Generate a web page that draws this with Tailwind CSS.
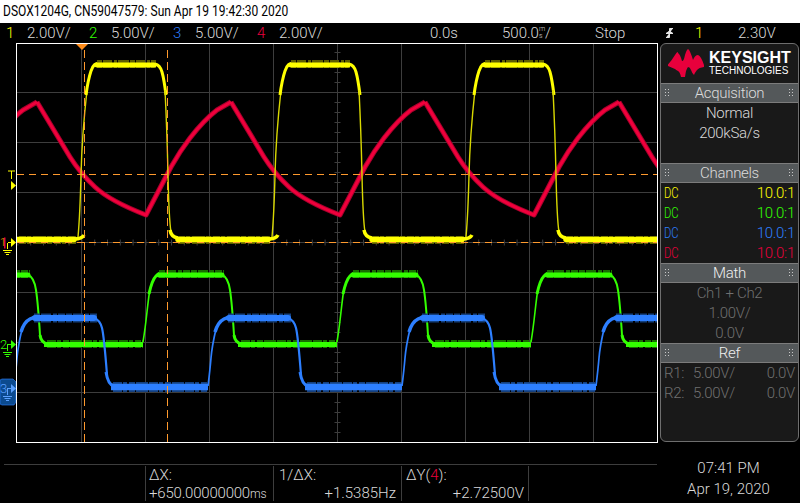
<!doctype html>
<html>
<head>
<meta charset="utf-8">
<script src="https://cdn.jsdelivr.net/npm/@tailwindcss/browser@4"></script>
</head>
<body class="bg-black">
<div class="w-[800px] h-[503px] overflow-hidden bg-black text-[#d9d9d9] font-['Roboto','Liberation_Sans',sans-serif] font-light text-[15px] leading-5">

  <!-- title -->
  <div class="h-[23px] bg-white text-black pl-[3px] pt-[1px] whitespace-nowrap">
    <div class="origin-left scale-x-[.775] text-[15.5px] font-normal">DSOX1204G, CN59047579: Sun Apr 19 19:42:30 2020</div>
  </div>

  <!-- channel / timebase status -->
  <div class="h-5 flex items-center pl-[6px] whitespace-nowrap">
    <span class="w-[21px] text-[#ffff00]">1</span><span class="w-[62px]">2.00V/</span>
    <span class="w-[22px] text-[#33ff00]">2</span><span class="w-[62px]">5.00V/</span>
    <span class="w-[22px] text-[#2d7fff]">3</span><span class="w-[62px]">5.00V/</span>
    <span class="w-[22px] text-[#e8003c]">4</span><span class="w-[151px]">2.00V/</span>
    <span class="w-[72px]">0.0s</span>
    <span class="w-[93px] flex items-center">500.0<span class="flex flex-col text-[7px] leading-[7px]"><span>m</span><span>s</span></span>/</span>
    <span class="w-[70px]">Stop</span>
    <span class="w-[30px]">
      <svg width="9" height="12" viewBox="0 0 9 12" fill="none" stroke="#e6e6e6"><path d="M1 10.5h3.5V1.500H8M1 6.500l3.500-2.500 3.500 2.500z" fill="#e6e6e6"/></svg>
    </span>
    <span class="w-[43px] text-[#ffff00]">1</span><span>2.30V</span>
  </div>

  <div class="flex h-[400px]">
    <!-- reference markers left of the graticule -->
    <svg class="w-4 h-[400px] shrink-0" viewBox="0 43 16 400">
      <g fill="#ffff00" stroke="none">
        <path d="M8 170.500h7v1h-3v7.500h-1v-7.500h-3z"/>
        <path d="M11 181l5 4.500-5 4.500z"/>
        <path d="M11 238l5 4.500-5 4.500z"/>
        <path d="M7 243h1v6h-1zM3 250h9v1h-9zM4.500 252h6v1h-6zM6 254h3v1h-3z"/>
        <path d="M8 242h3v1h-3z"/>
      </g>
      <path d="M4 237.500h1.500v11h-1.500z" fill="#e8003c"/>
      <text x="0" y="246" font-size="11" fill="#e8a000" font-family="Roboto, sans-serif">1</text>
      <g fill="#33ff00">
        <path d="M11 340l5 4.500-5 4.500z"/>
        <path d="M7 344h4v1h-3v6h-1zM3 352h9v1h-9zM4.500 354h6v1h-6zM6 356h3v1h-3z"/>
        <text x="0" y="349" font-size="13" font-family="Roboto, sans-serif">2</text>
      </g>
      <path d="M2 379h11l3 3v20l-2 3h-12l-2-1v-24z" fill="#0b4a8f" stroke="#2d7fff" stroke-width="0.6"/>
      <g fill="#5aa0ff">
        <path d="M11 384l5 4.500-5 4.500z"/>
        <path d="M7 388h4v1h-3v6h-1zM3 396h9v1h-9zM4.500 398h6v1h-6zM6 400h3v1h-3z"/>
        <text x="0" y="393" font-size="13" font-family="Roboto, sans-serif">3</text>
      </g>
    </svg>

    <!-- graticule and traces, drawn in page coordinates -->
    <svg class="w-[642px] h-[400px] shrink-0" viewBox="16 43 642 400" fill="none">
      <defs>
        <clipPath id="plot"><rect x="17" y="44" width="640" height="398"/></clipPath>
        <g id="red">
          <path stroke-linejoin="round" d="M37 102L70 157Q80 173 95 187T146 215L171 167Q180 151 190 138Q204 120 217 110L231 102"/>
        </g>
        <g id="yellow">
          <path stroke="#d8d800" stroke-width="1.400" d="M78 237Q80 215 81 175T87 90"/>
          <path stroke="#ffff00" stroke-width="3" d="M86 95Q88 80 91 71T99 64"/>
          <path stroke="#5f5f00" stroke-width="8" stroke-dasharray="5 1 9 2 3 1 11 1" d="M97 64H156"/>
          <path stroke="#ffff00" stroke-width="5" stroke-linecap="round" d="M97 65H154"/>
          <path stroke="#ffff00" stroke-width="3" d="M155 64Q160 65 162 72T166 95"/>
          <path stroke="#d8d800" stroke-width="1.400" d="M165 90Q167 130 168 175T171 232"/>
          <path stroke="#ffff00" stroke-width="3.500" d="M170 230Q171 237 178 238"/>
          <path stroke="#5f5f00" stroke-width="8" stroke-dasharray="7 1 4 2 13 1 5 2" d="M178 240H270"/>
          <path stroke="#ffff00" stroke-width="5.500" stroke-linecap="round" d="M178 239.500H268"/>
          <path stroke="#ffff00" stroke-width="3.500" d="M268 239Q276 239 278 235"/>
        </g>
        <g id="green">
          <path stroke="#33ff00" stroke-width="1.600" d="M143 342Q145 330 147 312T150 289"/>
          <path stroke="#33ff00" stroke-width="3" d="M149 294Q152 280 156 276T162 274"/>
          <path stroke="#176f00" stroke-width="8" stroke-dasharray="6 1 10 2 4 1 7 1" d="M159 274H224"/>
          <path stroke="#33ff00" stroke-width="5" stroke-linecap="round" d="M159 275H222"/>
          <path stroke="#33ff00" stroke-width="2" d="M222 275Q228 277 230 290T234 335"/>
          <path stroke="#33ff00" stroke-width="3" d="M234 335Q235 343 242 344"/>
          <path stroke="#176f00" stroke-width="8" stroke-dasharray="9 1 4 2 6 1 12 1" d="M241 344H337"/>
          <path stroke="#33ff00" stroke-width="5" d="M238 344.500H337"/>
        </g>
        <g id="blue">
          <path stroke="#2d7fff" stroke-width="1.700" d="M208 386Q210 370 211 358T216 329"/>
          <path stroke="#2d7fff" stroke-width="3.500" d="M215 332Q218 322 224 319T232 318"/>
          <path stroke="#14407f" stroke-width="9" stroke-dasharray="6 1 10 2 4 1 7 1" d="M228 318H291"/>
          <path stroke="#2d7fff" stroke-width="6" stroke-linecap="round" d="M229 318H288"/>
          <path stroke="#2d7fff" stroke-width="2.200" d="M288 318Q294 320 296 328T301 375"/>
          <path stroke="#2d7fff" stroke-width="3" d="M300 372Q302 385 308 386"/>
          <path stroke="#14407f" stroke-width="10" stroke-dasharray="9 1 4 2 6 1 12 1" d="M307 387H402"/>
          <path stroke="#2d7fff" stroke-width="6.500" d="M305 387H402"/>
        </g>
      </defs>

      <rect x="16" y="43" width="642" height="400" fill="#000"/>
      <g stroke="#3d3d3d">
        <path d="M81.500 44V442M145.500 44V442M209.500 44V442M273.500 44V442M337.500 44V442M401.500 44V442M465.500 44V442M529.500 44V442M593.500 44V442"/>
        <path d="M17 92.500H657M17 142.500H657M17 192.500H657M17 242.500H657M17 292.500H657M17 342.500H657M17 392.500H657"/>
        <path stroke-width="6" stroke-dasharray="1 11.800" d="M17.400 242.500H657"/>
        <path stroke-width="6" stroke-dasharray="1 9" d="M337.500 52V442"/>
      </g>

      <g clip-path="url(#plot)">
        <g stroke="#a8002c" stroke-width="5">
          <use href="#red" x="-194"/><use href="#red"/><use href="#red" x="194"/><use href="#red" x="388"/><use href="#red" x="582"/>
        </g>
        <g stroke="#f0003c" stroke-width="3">
          <use href="#red" x="-194"/><use href="#red"/><use href="#red" x="194"/><use href="#red" x="388"/><use href="#red" x="582"/>
        </g>
        <use href="#yellow" x="-194"/><use href="#yellow"/><use href="#yellow" x="194"/><use href="#yellow" x="388"/>
        <use href="#green" x="-194"/><use href="#green"/><use href="#green" x="194"/><use href="#green" x="388"/>
        <use href="#blue" x="-194"/><use href="#blue"/><use href="#blue" x="194"/><use href="#blue" x="388"/>

        <!-- cursors -->
        <g stroke="#ff9a2e" stroke-dasharray="7 5">
          <path d="M17 174.500H657M17 242.500H657"/>
          <path d="M84.500 50V442M167.500 50V442" stroke-dasharray="8 4"/>
        </g>
      </g>
      <path d="M76 44h12l-6 6z" fill="#ff8c1a"/>
      <rect x="16.500" y="43.500" width="641" height="399" stroke="#fff"/>
    </svg>

    <!-- softkey side panel -->
    <div class="ml-[2px] w-[139px] h-[399px] border border-[#6e6e6e] rounded-[6px] bg-[#191919] text-center overflow-hidden tracking-[-0.3px]">
      <svg class="hidden">
        <symbol id="grip" viewBox="0 0 5 8"><path fill="#c8c8c8" d="M0 0h1v1H0zM3 0h1v1H3zM0 3h1v1H0zM3 3h1v1H3zM0 6h1v1H0zM3 6h1v1H3z"/></symbol>
      </svg>

      <div class="h-[39px] flex items-center">
        <svg class="ml-[7px] shrink-0" width="36" height="29" viewBox="668 49 36 29">
          <path fill="#e8003c" d="M668 64.500Q672 60 675 55T678 53Q680 54 682 61Q683 61.500 684 59Q686 50 688 49Q690 50 693 60Q695 55 698 55Q701 56 704 65V67Q699 67.500 697 70T694 75Q692 73 691 70T688 67Q686 69 685 77H681Q680 72 678 71T675 69L668 66z"/>
        </svg>
        <div class="ml-[5px] text-left font-['Liberation_Sans',sans-serif] font-normal text-white tracking-normal">
          <div class="text-[16px] font-bold leading-[15px]">KEYSIGHT</div>
          <div class="text-[10px] leading-[12px]">TECHNOLOGIES</div>
        </div>
      </div>

      <div class="h-5 flex items-center justify-between px-[4px] bg-[#54585a] border-y border-[#7c7c7c] text-[#dcdcdc]"><svg class="w-[5px] h-2"><use href="#grip"/></svg>Acquisition<svg class="w-[5px] h-2"><use href="#grip"/></svg></div>
      <div class="h-[60px]">
        <div class="h-5">Normal</div>
        <div class="h-5">200kSa/s</div>
      </div>

      <div class="h-5 flex items-center justify-between px-[4px] bg-[#54585a] border-y border-[#7c7c7c] text-[#dcdcdc]"><svg class="w-[5px] h-2"><use href="#grip"/></svg>Channels<svg class="w-[5px] h-2"><use href="#grip"/></svg></div>
      <div class="h-20 px-[3px]">
        <div class="h-5 flex justify-between text-[#ffff00]"><span class="origin-left scale-x-[.75]">DC</span><span>10.0:1</span></div>
        <div class="h-5 flex justify-between text-[#33ff00]"><span class="origin-left scale-x-[.75]">DC</span><span>10.0:1</span></div>
        <div class="h-5 flex justify-between text-[#2d7fff]"><span class="origin-left scale-x-[.75]">DC</span><span>10.0:1</span></div>
        <div class="h-5 flex justify-between text-[#e8003c]"><span class="origin-left scale-x-[.75]">DC</span><span>10.0:1</span></div>
      </div>

      <div class="h-5 flex items-center justify-between px-[4px] bg-[#54585a] border-y border-[#7c7c7c] text-[#f0f0f0]"><svg class="w-[5px] h-2"><use href="#grip"/></svg>Math<svg class="w-[5px] h-2"><use href="#grip"/></svg></div>
      <div class="h-[60px] text-[#707070]">
        <div class="h-5">Ch1 + Ch2</div>
        <div class="h-5">1.00V/</div>
        <div class="h-5">0.0V</div>
      </div>

      <div class="h-5 flex items-center justify-between px-[4px] bg-[#54585a] border-y border-[#7c7c7c] text-[#f0f0f0]"><svg class="w-[5px] h-2"><use href="#grip"/></svg>Ref<svg class="w-[5px] h-2"><use href="#grip"/></svg></div>
      <div class="px-[3px] text-[#707070] text-left">
        <div class="h-5 flex"><span class="w-[29px]">R1:</span><span class="flex-1">5.00V/</span><span>0.0V</span></div>
        <div class="h-5 flex"><span class="w-[29px]">R2:</span><span class="flex-1">5.00V/</span><span>0.0V</span></div>
      </div>
    </div>
  </div>

  <!-- cursor readouts and clock -->
  <div class="flex h-[60px]">
    <div class="w-[653px] ml-[4px] mt-[21px] border-t border-[#3d3d3d] flex h-[37px] shrink-0">
      <div class="w-[141px]"></div>
      <div class="w-[128px] border-l border-[#3d3d3d] px-[3px] mt-[1px]">
        <div class="h-[18px] leading-[18px]">ΔX:</div>
        <div class="h-[18px] leading-[18px] whitespace-nowrap tracking-[-0.2px]">+650.00000000<span class="text-[12px]">ms</span></div>
      </div>
      <div class="w-[128px] border-l border-[#3d3d3d] px-[5px] mt-[1px]">
        <div class="h-[18px] leading-[18px]">1/ΔX:</div>
        <div class="h-[18px] leading-[18px] text-right">+1.5385Hz</div>
      </div>
      <div class="w-[128px] border-l border-r border-[#3d3d3d] px-[4px] mt-[1px]">
        <div class="h-[18px] leading-[18px]">ΔY(<span class="text-[#e8003c]">4</span>):</div>
        <div class="h-[18px] leading-[18px] text-right">+2.72500V</div>
      </div>
    </div>
    <div class="flex-1 text-center pt-[15px]">
      <div class="h-5">07:41 PM</div>
      <div class="h-5 mt-[1px]">Apr 19, 2020</div>
    </div>
  </div>
</div>
</body>
</html>
